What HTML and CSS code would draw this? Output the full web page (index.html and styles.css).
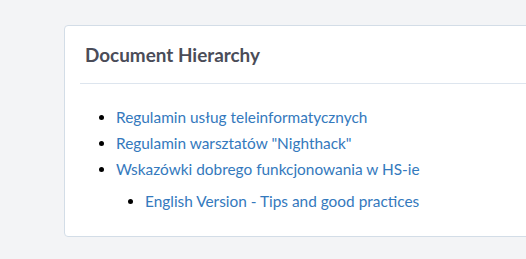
FILE: index.html
```html
<!DOCTYPE html>
<html lang="pl">
<head>
<meta charset="utf-8">
<title>Document Hierarchy</title>
<link rel="stylesheet" href="styles.css">
</head>
<body>
<div class="card">
  <div class="card-header">
    <h2 class="card-title">Document Hierarchy</h2>
  </div>
  <div class="card-body">
    <ul class="tree">
      <li><a href="#">Regulamin usług teleinformatycznych</a></li>
      <li><a href="#">Regulamin warsztatów "Nighthack"</a></li>
      <li><a href="#">Wskazówki dobrego funkcjonowania w HS-ie</a>
        <ul class="tree sub">
          <li><a href="#">English Version - Tips and good practices</a></li>
        </ul>
      </li>
    </ul>
  </div>
</div>
</body>
</html>
```
FILE: styles.css
```css
html, body {
  margin: 0;
  padding: 0;
  background: #f3f4f6;
  overflow: hidden;
  font-family: Lato, "Open Sans", sans-serif;
}
.card {
  margin: 25px 0 0 64px;
  width: 520px;
  height: 212px;
  background: #ffffff;
  border: 1px solid #d3dde7;
  border-radius: 4px;
  box-sizing: border-box;
}
.card-header {
  margin: 0 0 0 15px;
  height: 57px;
  display: flex;
  align-items: center;
  border-bottom: 1px solid #dde5ee;
}
.card-title {
  margin: 0 0 0 5px;
  font-size: 18.9px;
  font-weight: 700;
  color: #4a4c58;
}
.card-body {
  padding: 20px 0 0 0;
}
.tree {
  margin: 0 0 0 16px;
  padding-left: 35px;
  list-style: disc;
  font-size: 15.4px;
  line-height: 26px;
  color: #000;
}
.tree.sub {
  margin: 6px 0 0 0;
  padding-left: 29px;
}
.tree a {
  color: #3479bd;
  text-decoration: none;
}
```
